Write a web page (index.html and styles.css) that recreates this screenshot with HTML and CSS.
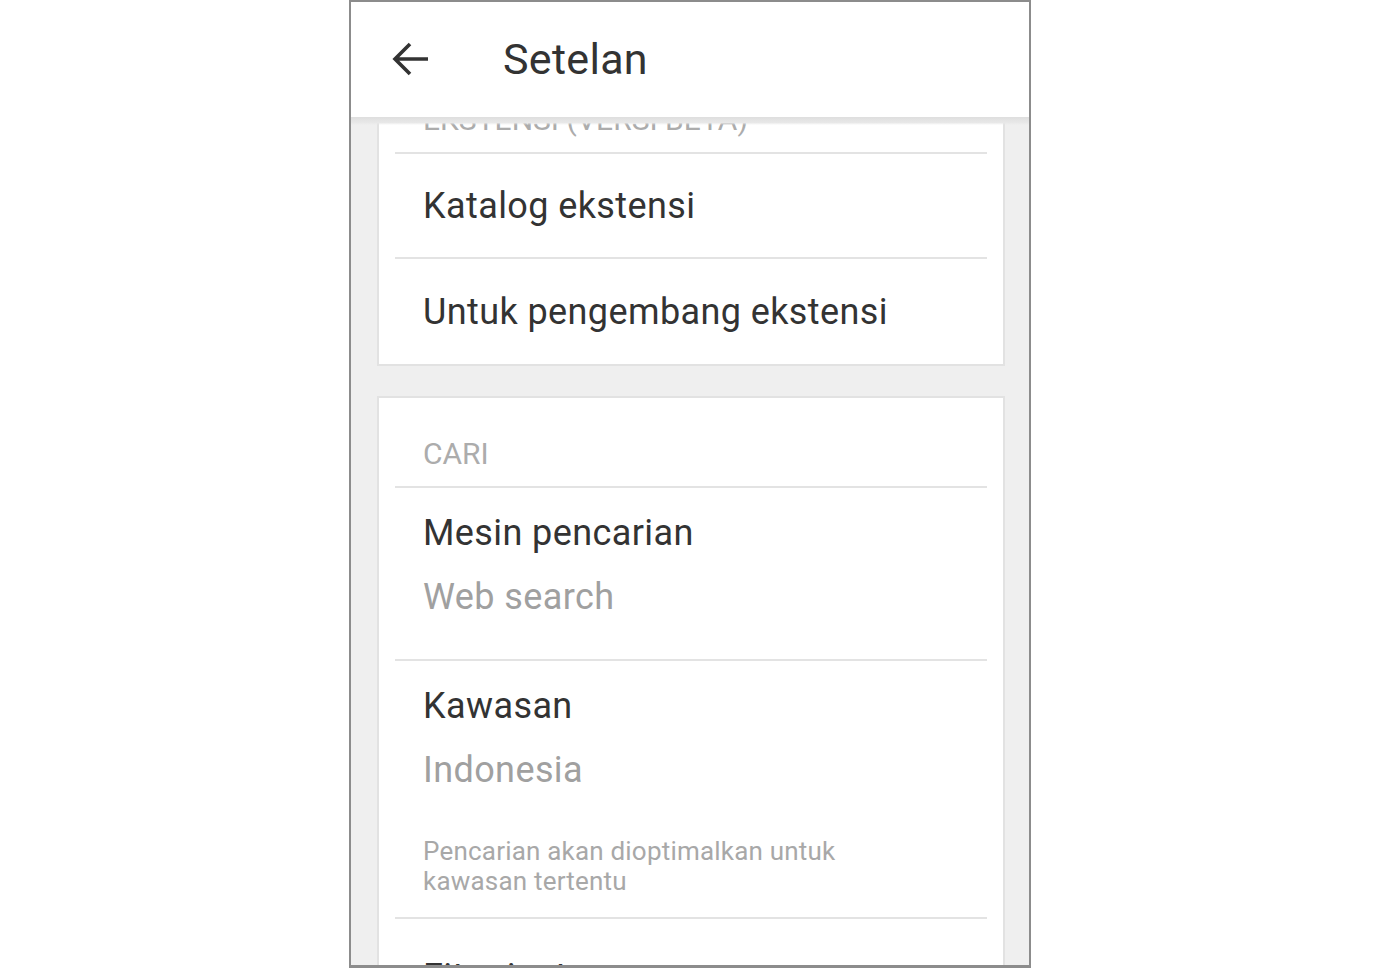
FILE: index.html
```html
<!DOCTYPE html>
<html lang="id">
<head>
<meta charset="utf-8">
<title>Setelan</title>
<link rel="stylesheet" href="styles.css">
</head>
<body>
<div class="phone">
  <header class="appbar">
    <svg class="back" width="40" height="36" viewBox="0 0 40 36" aria-hidden="true">
      <path d="M37 18H5M19 3L4 18l15 15" fill="none" stroke="#333" stroke-width="3.6" stroke-linecap="butt" stroke-linejoin="miter"/>
    </svg>
    <h1 class="title">Setelan</h1>
  </header>
  <main class="content">
    <section class="card card-scrolled">
      <div class="section-head">EKSTENSI (VERSI BETA)</div>
      <div class="divider"></div>
      <div class="row row-single">Katalog ekstensi</div>
      <div class="divider"></div>
      <div class="row row-single row-last">Untuk pengembang ekstensi</div>
    </section>
    <section class="card">
      <div class="section-head">CARI</div>
      <div class="divider"></div>
      <div class="row row-double">
        <div class="row-title">Mesin pencarian</div>
        <div class="row-value">Web search</div>
      </div>
      <div class="divider"></div>
      <div class="row row-desc">
        <div class="row-title">Kawasan</div>
        <div class="row-value">Indonesia</div>
        <div class="row-note">Pencarian akan dioptimalkan untuk<br>kawasan tertentu</div>
      </div>
      <div class="divider"></div>
      <div class="row row-double row-toggle">
        <div class="row-title">Fitur instan</div>
      </div>
    </section>
  </main>
</div>
</body>
</html>
```
FILE: styles.css
```css
html, body {
  margin: 0;
  padding: 0;
  background: #ffffff;
}
body {
  font-family: Roboto, "Noto Sans", "Liberation Sans", sans-serif;
  height: 968px;
  overflow: hidden;
}
.phone {
  position: relative;
  box-sizing: border-box;
  width: 682px;
  height: 968px;
  margin-left: 349px;
  border: 2px solid #8c8c8c;
  border-bottom-width: 3px;
  background: #efefef;
  overflow: hidden;
  display: flex;
  flex-direction: column;
}
.appbar {
  position: relative;
  z-index: 2;
  flex: 0 0 auto;
  height: 115px;
  background: #ffffff;
  display: flex;
  align-items: center;
  padding-left: 40px;
  padding-bottom: 2px;
  box-sizing: border-box;
}
.appbar::after {
  content: "";
  position: absolute;
  left: 0;
  right: 0;
  top: 100%;
  height: 8px;
  background: linear-gradient(#dedede, #e8e8e8 70%, rgba(232,232,232,0));
}
.back {
  display: block;
  flex: 0 0 auto;
}
.title {
  margin: 0 0 0 72px;
  font-weight: 400;
  font-size: 43px;
  letter-spacing: 0.3px;
  color: #333333;
}
.content {
  flex: 1 1 auto;
  padding: 0 24px 0 26px;
  display: flex;
  flex-direction: column;
  gap: 30px;
}
.card {
  background: #ffffff;
  border: 2px solid #e2e2e2;
  flex: 0 0 auto;
}
.card-scrolled {
  margin-top: -55px;
}
.section-head {
  height: 88px;
  box-sizing: border-box;
  padding: 41px 0 0 44px;
  font-size: 30px;
  line-height: 30px;
  color: #acacac;
}
.divider {
  height: 2px;
  margin: 0 16px 0 16px;
  background: #e3e3e3;
}
.row {
  padding-left: 44px;
  color: #333333;
  font-size: 36px;
  letter-spacing: 0.4px;
}
.row-single {
  height: 103px;
  display: flex;
  align-items: center;
}
.row-last {
  height: 105px;
}
.row-double {
  box-sizing: border-box;
  height: 171px;
  padding-top: 26px;
}
.row-toggle {
  padding-top: 39px;
}
.row-desc {
  box-sizing: border-box;
  height: 256px;
  padding-top: 26px;
}
.row-title {
  line-height: 38px;
  color: #333333;
}
.row-value {
  margin-top: 26px;
  line-height: 38px;
  color: #a0a0a0;
}
.row-note {
  margin-top: 47px;
  font-size: 26px;
  letter-spacing: 0.2px;
  line-height: 30px;
  color: #a8a8a8;
}
```
